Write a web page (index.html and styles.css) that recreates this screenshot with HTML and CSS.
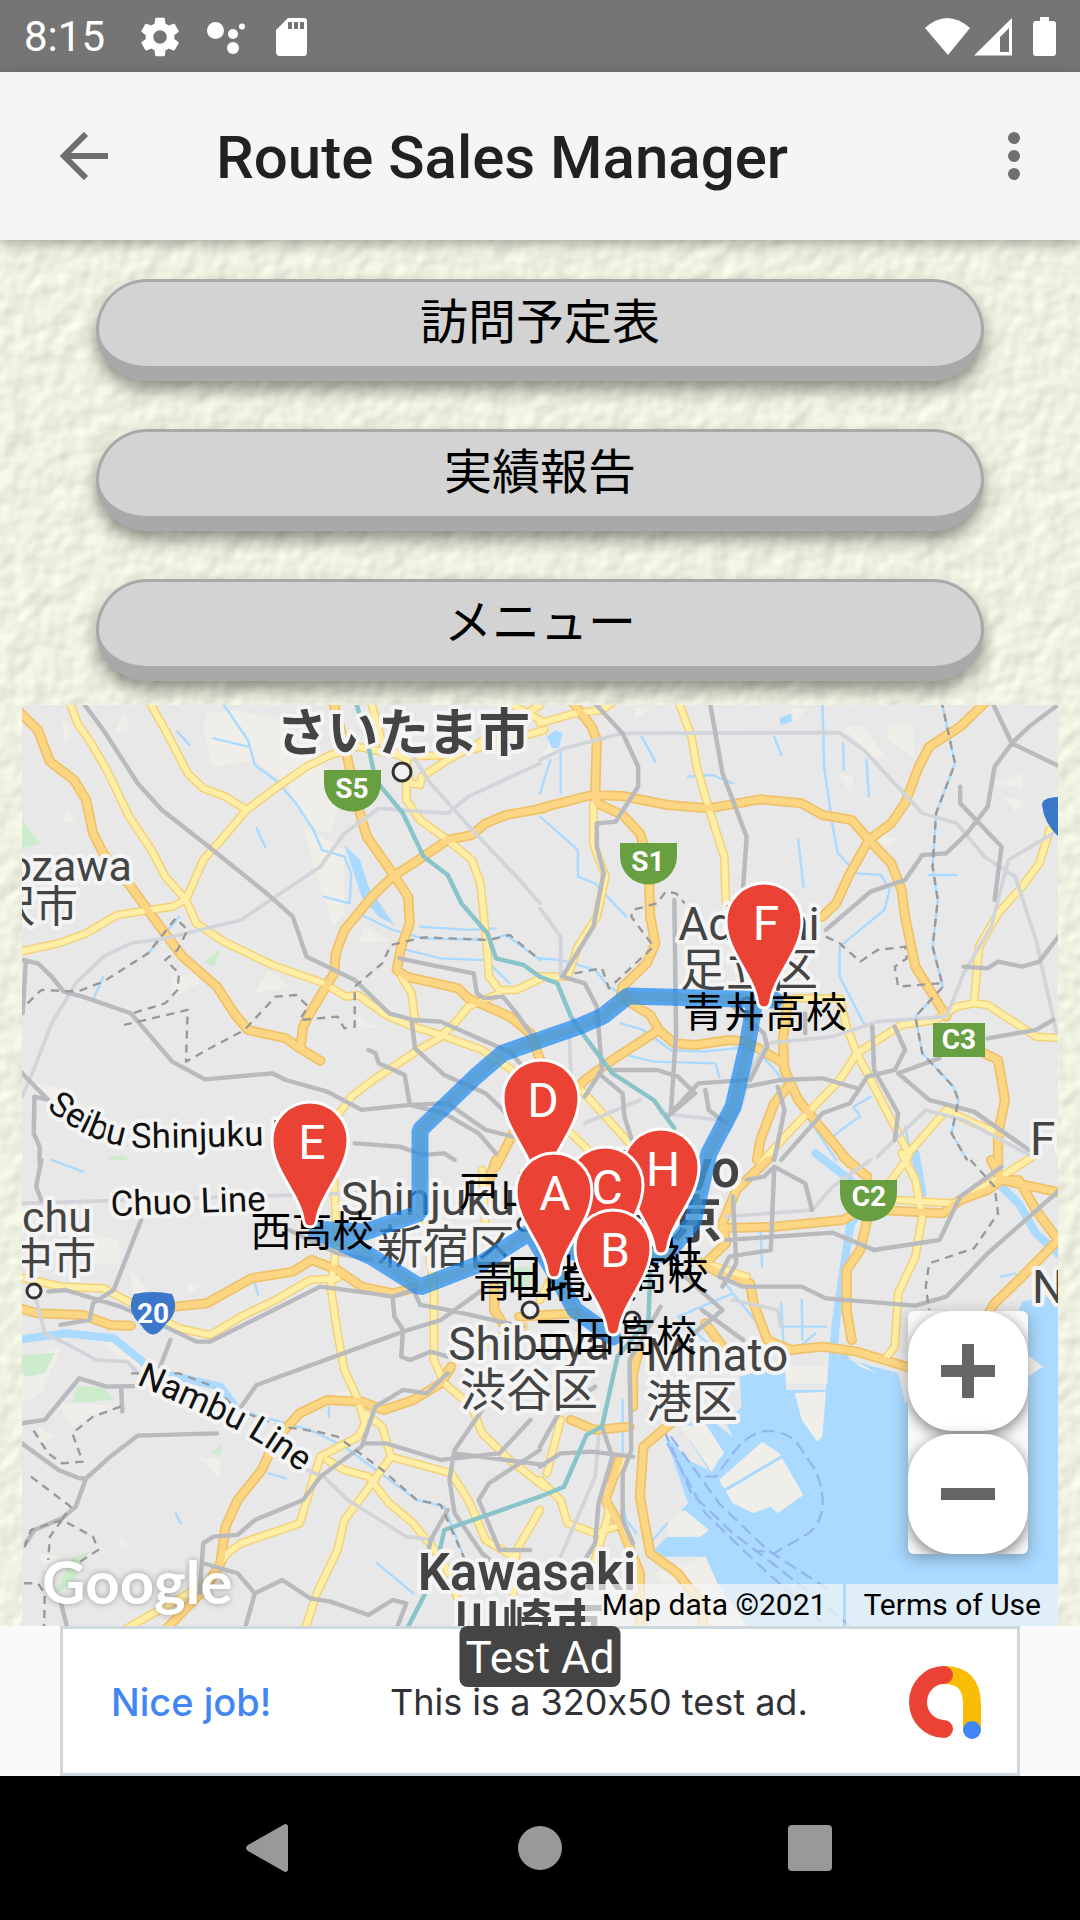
FILE: index.html
```html
<!DOCTYPE html>
<html lang="ja">
<head>
<meta charset="utf-8">
<meta name="viewport" content="width=device-width, initial-scale=1">
<title>Route Sales Manager</title>
<link rel="stylesheet" href="styles.css">
</head>
<body>
<div class="status-bar">
  <span class="clock">8:15</span>
  <svg class="status-left" viewBox="136 10 176 52" aria-hidden="true">
    <g fill="#fff">
      <path transform="translate(137 13) scale(1.92)" d="M19.43 12.98c.04-.32.07-.64.07-.98s-.03-.66-.07-.98l2.11-1.65c.19-.15.24-.42.12-.64l-2-3.46c-.12-.22-.39-.3-.61-.22l-2.49 1c-.52-.4-1.08-.73-1.69-.98l-.38-2.65C14.46 2.18 14.25 2 14 2h-4c-.25 0-.46.18-.49.42l-.38 2.65c-.61.25-1.17.59-1.69.98l-2.49-1c-.23-.09-.49 0-.61.22l-2 3.46c-.13.22-.07.49.12.64l2.11 1.65c-.04.32-.07.65-.07.98s.03.66.07.98l-2.11 1.65c-.19.15-.24.42-.12.64l2 3.46c.12.22.39.3.61.22l2.49-1c.52.4 1.08.73 1.69.98l.38 2.65c.03.24.24.42.49.42h4c.25 0 .46-.18.49-.42l.38-2.65c.61-.25 1.17-.59 1.69-.98l2.49 1c.23.09.49 0 .61-.22l2-3.46c.12-.22.07-.49-.12-.64l-2.11-1.65zM12 15.5c-1.93 0-3.5-1.57-3.5-3.5s1.57-3.5 3.5-3.5 3.5 1.57 3.5 3.5-1.57 3.5-3.500 3.500z"/>
      <circle cx="215.500" cy="29.500" r="8.500"/><circle cx="233" cy="33" r="5"/><circle cx="242" cy="25.500" r="3"/><circle cx="233" cy="47" r="6"/>
      <path fill-rule="evenodd" d="M288 17h16q3 0 3 3v31q0 4-3 4h-24q-4 0-4-4V29zM288 21v7h4v-7zM294 21v7h4v-7zM300 21v7h4v-7z"/>
    </g>
  </svg>
  <svg class="status-right" viewBox="924 10 134 52" aria-hidden="true">
    <path fill="#fff" d="M925 27Q947 7 970 27L948 54z"/>
    <path fill="#fff" fill-rule="evenodd" d="M1012 17V54.500H974zM1009 27L1000 36V51H1009z"/>
    <path fill="#fff" d="M1040 16h9v4h4q3 0 3 3v29q0 3-3 3h-17q-3 0-3-3V23q0-3 3-3h4z"/>
  </svg>
</div>

<header class="app-bar">
  <button class="icon-button" type="button" aria-label="Back">
    <svg viewBox="0 0 48 48"><path d="M48 24H5M26 2L4 24L26 46" fill="none" stroke="#6f6f6f" stroke-width="6"/></svg>
  </button>
  <h1>Route Sales Manager</h1>
  <button class="icon-button menu-button" type="button" aria-label="More options">
    <svg viewBox="0 0 48 48" fill="#6f6f6f"><circle cx="24" cy="6" r="6"/><circle cx="24" cy="24" r="6"/><circle cx="24" cy="42" r="6"/></svg>
  </button>
</header>

<main class="page">
  <svg class="paper" aria-hidden="true">
    <filter id="paper-grain" x="0" y="0" width="100%" height="100%" color-interpolation-filters="sRGB">
      <feTurbulence type="fractalNoise" baseFrequency="0.05" numOctaves="2" seed="8"/>
      <feDiffuseLighting surfaceScale="1" diffuseConstant="1.100" lighting-color="#f5f7e7"><feDistantLight azimuth="225" elevation="62"/></feDiffuseLighting>
    </filter>
    <rect width="100%" height="100%" filter="url(#paper-grain)"/>
  </svg>

  <nav class="actions">
    <button class="action" type="button">訪問予定表</button>
    <button class="action" type="button">実績報告</button>
    <button class="action" type="button">メニュー</button>
  </nav>

  <section class="map" aria-label="Map">
    <svg class="map-canvas" viewBox="22 705 1036 921" preserveAspectRatio="xMidYMid slice">
      <defs>
        <path id="pin" d="M0 0C-7 0-6-6-8-13C-13-35-38-58-38-87A38 38 0 0 1 38-87C38-58 13-35 8-13C6-6 7 0 0 0Z"/>
        <path id="exit" d="M0 0H57V13A28 28 0 0 1 0 13Z"/>
        <path id="seibu" d="M46 1108Q90 1145 138 1148Q200 1148 380 1142"/>
        <path id="nambu" d="M136 1384L212 1418Q262 1440 318 1486"/>
        <path id="loop-west" d="M775 1000L628 996L603 1016L580 1026L540 1040L503 1053L475 1077L420 1130V1213L365 1232L311 1229L372 1257L420 1287L482 1263L530 1232L555 1273L575 1310L613 1337"/>
        <path id="loop-east" d="M755 1000L747 1047L733 1107L709 1153L693 1222L668 1253L600 1262L545 1240"/>
        <g id="major">
          <path class="nw" d="M50 30L110 90L145 185L215 240L250 300L270 400L300 460L380 560L450 660L530 770L630 860L680 940L720 990L830 1015L870 1045L930 1082M970 15L1000 130L1020 230L1045 340L1065 410L1140 520L1185 590L1190 670L1165 740L1152 810L1180 830L1330 865L1360 895L1480 950L1540 1000L1568 1080M1580 325L1470 345L1410 370L1370 405L1300 420L1200 490L1140 530L1080 590L1000 690L975 760L970 820L900 940L880 980L872 1045M1500 1280L1440 1400"/>
          <path class="ne" d="M90 0L150 80L165 120L160 290L165 310L240 345L290 400L315 480L320 650L335 730L310 790L240 860L235 890L320 945L345 990L390 1030L450 1035L550 1020L600 1025L700 1085M0 325L150 285L240 288L370 315L490 325L640 298L760 310L820 345L905 360L955 420L1020 490L1050 570L1060 650L1090 800L1180 950M1300 0L1220 80L1130 140L1100 200L1060 310L1020 370L955 420L900 520L860 610L820 650M345 990L210 1080L130 1140L100 1175M720 900L705 1020L710 1110L750 1200L900 1390M1290 1060L1330 1080L1350 1200L1330 1300L1330 1390M720 1160L680 1210L640 1320L630 1380"/>
          <path class="sw" d="M50 443L110 460L240 465L320 495L380 497M510 440L600 430L730 355L850 335L905 300L980 330L1050 380L1140 400L1200 385M480 1410L600 1280L640 1210L655 1100L690 1020L760 930L800 840L870 760L950 720L1050 725L1115 750L1200 720L1280 670L1310 620M1435 380L1435 450L1460 490M1440 0L1420 60"/>
          <path class="se" d="M530 205L680 200L880 180L930 150L980 150L1170 160L1220 120L1300 90L1340 60L1520 100M950 180L930 270L890 330L890 450L905 540M1310 0L1340 60L1390 60L1440 150L1504 240L1400 350L1320 430L1290 480M880 -10L950 50M470 310L540 350L610 370L620 430L660 540L730 570L820 560L920 575L1080 625M380 790L300 860L290 1010L320 1180L400 1240L460 1320L480 1410M290 560L270 640L270 740M-60 470L100 460M480 310L540 250L530 190L570 90L660 0M90 780L160 810L260 800M230 900L190 1020L240 1110L290 1240L290 1398M480 490L560 600"/>
        </g>
        <g id="minor">
          <path class="nw" d="M200 0L225 70L265 130L310 210L375 350L440 450L480 530L540 600M430 0L480 90L545 220L590 265L655 290L715 330M1580 90L1450 130L1300 165L1180 170L1040 140L960 165L890 200L800 265L715 330L650 410L590 480L540 600L500 620L340 645L250 700L170 730L50 757M540 600L570 670L650 725L790 795L940 850L1005 890L1040 885L1120 945L1200 980L1280 1005L1400 1050L1500 1120M1180 180L1180 300L1220 360L1300 420L1370 480L1395 550L1405 650L1415 760L1420 830L1450 870L1500 870L1580 830M1450 880L1360 920L1320 970L1280 1010L1200 1060L1090 1135L1020 1190L950 1290M1165 830L1195 880L1205 960M1080 15L1110 130L1180 180L1190 250L1220 255L1225 230L1300 180L1390 130L1568 15M1500 120L1410 70M1568 60L1480 10"/>
          <path class="ne" d="M0 70L100 40L180 30L220 0M400 0L440 110L455 200L490 325L535 470L540 610M155 310L155 430L190 530L165 650L110 740L80 830M0 830L80 830M1480 390L1450 490L1400 560L1330 640L1275 740L1260 910L1210 920L1150 960L1050 975L920 1060M1260 910L1300 915L1440 1010L1520 1015M740 895L870 895L890 980L920 1060L1070 1360L1180 1230L1260 1270L1340 1300M920 1060L870 1140L720 1300L640 1390M120 1170L260 1330M60 1270L160 1370"/>
          <path class="sw" d="M50 350L180 380L300 385L400 440L520 505L610 525L700 470L800 420L900 360L980 355M965 0L980 240L960 380L980 520L1000 630L1040 720L1060 790L1040 830L930 890L870 1090L700 1150L660 1180L600 1270L360 1410M1060 760L1110 800L1135 890L1080 970L1000 1080L980 1170L920 1300L885 1410M950 900L1000 930L1070 950L1130 1030L1200 1090L1270 1180L1310 1250L1350 1398M1135 890L1310 940L1360 1020L1410 1140L1490 1190M1235 180L1260 390L1260 600L1290 670L1370 740L1400 820L1480 900L1580 980M1568 1050L1500 1170L1490 1300M1390 560L1520 500M1400 30L1410 200"/>
          <path class="se" d="M1050 -20L1090 60L1110 170L1090 290L1040 400L1030 560L1000 600M1070 -10L1000 90M1040 120L1200 130L1340 50L1430 -10M0 960L60 1020L80 1090L160 1120L220 1100M160 1200L200 1060L190 1000L240 900M60 780L20 940M0 270L60 300L0 420M480 310L600 350"/>
        </g>
      </defs>

      <rect class="land" x="22" y="705" width="1036" height="921"/>

      <g class="fields">
        <path class="nw" d="M600 40L680 30L820 60L880 160L1000 240L960 400L900 380L830 250L740 180L620 200L590 100ZM880 380L1000 450L1000 640L970 680L930 560ZM360 40L380 90L330 100ZM180 60L215 80L190 130ZM500 830L570 820L580 850L500 890ZM780 810L840 860L740 880ZM1060 680L1130 720L1040 730ZM1040 950L1095 980L1040 990ZM200 320L215 370L180 365ZM100 1150L180 1165L150 1200Z"/>
        <path class="ne" d="M880 80L940 80L1010 180L960 170ZM1010 70L1080 70L1090 175L1010 120ZM865 220L910 230L905 285ZM1320 250L1400 220L1400 265ZM1345 290L1410 305L1380 335ZM730 20L770 30L740 70ZM960 390L1040 420L1000 440ZM30 110L60 160L0 190ZM280 20L320 30L270 60Z"/>
        <path class="sw" d="M265 220L345 240L350 310L255 310ZM380 330L430 390L390 410ZM570 890L640 900L640 955ZM170 730L330 735L210 800ZM350 1130L375 1160L345 1170ZM540 370L585 378L550 400ZM64 590L180 560L120 700L64 730ZM280 530L360 550L420 630L360 600ZM110 1180L180 1190L140 1250ZM520 700L640 700L680 750L560 740ZM960 700L1040 690L1020 720ZM110 800L160 830L120 850Z"/>
      </g>
      <g class="parks">
        <path class="nw" d="M64 360L118 432L64 445ZM640 745L595 785L622 802ZM310 1380Q350 1355 375 1380Z"/>
        <path class="sw" d="M64 585L160 578L130 640L80 650L64 640ZM225 680L300 680L330 720L210 728ZM210 1190L260 1175L200 1280L160 1300ZM645 850L640 885L612 880ZM1470 320H1540V380H1470Z"/>
      </g>
      <g class="water">
        <path class="nw" d="M1000 435L1045 480L1070 560L1145 675L1100 650L1050 590Z"/>
        <path class="ne" d="M20 110L45 90L65 100L55 145L35 145ZM695 55L730 40L730 65L700 75Z"/>
        <path class="se" d="M1520 400L1400 425L1380 480L1300 560L1180 640L1060 730L1040 640L900 600L890 580L840 590L830 690L715 690L710 610L580 650L585 740L540 790L560 830L510 790L420 790L440 850L490 930L520 900L500 935L430 900L360 820L430 1030L410 1050L490 1110L465 1130L370 1130L310 1190L480 1190L520 1280L610 1410L1520 1410Z"/>
      </g>
      <g class="rivers">
        <path class="nw" d="M650 15L720 120L740 195L800 240L860 310L910 390L935 450L1000 470L1020 520L1015 610L940 590M620 115L720 140M515 95L550 135M745 385L770 440M1040 640L1140 690L1230 715L1420 720L1470 705L1568 780M1220 680L1360 690L1440 685M1180 750L1280 775L1400 780M430 760L520 650M270 900L300 830M1430 800L1480 850"/>
        <path class="ne" d="M820 0L825 200L850 380L865 460L920 520L990 525L1015 570L1000 630L870 740L870 830L945 980M1165 0L1205 190L1150 340L1140 500L1155 600L1140 740L1170 860L1090 950L1110 1060L1200 1160L1215 1200L1195 1300L1240 1380M0 350L110 450L110 530L160 550L250 650M0 775L60 780L160 810L200 860L235 880M235 970L300 990L380 1050L470 1055L620 1040L690 1120L860 1380M230 1060L330 1085L510 1090L520 1130M430 230L500 225L560 250M295 110L335 185M680 110L700 165M880 130L882 210M948 180L955 290M750 420L765 560M30 180L0 280M60 150L60 280M850 1310L900 1270L930 1250L910 1220L960 1190M1130 525L1210 525M1060 1280L1080 1380"/>
        <path class="sw" d="M690 750L900 810L1000 860L1210 1020L1290 1040L1350 1200M740 370L750 405M780 940L830 955M510 1060L525 1090M955 740L955 770M150 0L240 35M1095 1210L1200 1300"/>
        <path class="se" d="M490 300L560 400L640 500M400 470L560 400M640 200L645 320M700 430L710 600L800 520M760 420L762 540M710 500H830M710 560H830M240 720L240 1030L250 1080L280 1120M400 470L520 580M310 1160L370 1090M430 1050L370 1140M1500 500L1440 420M1340 350L1380 340"/>
      </g>
      <g class="broad-rivers">
        <path class="sw" d="M50 540L190 520L330 535L420 610M470 640L640 680L690 750"/>
        <path class="se" d="M850 600L860 480L900 200L930 140L900 60L800 -20M1320 60L1390 130L1440 220L1504 280M1090 -20L1110 100"/>
      </g>
      <g class="islands">
        <path class="se" d="M740 700L830 695L820 830L805 845L760 780ZM520 960L645 845L695 880L765 1005L690 1060L670 1040L620 1060L560 1030ZM1410 580L1460 620L1410 655ZM900 595L980 640L930 620ZM715 620H835V670H715ZM410 800L480 790L535 880L495 930ZM370 1090L420 1050L490 1110L465 1130L370 1130ZM330 1240L480 1190L520 1280L600 1398H500L460 1300L350 1260Z"/>
        <path class="island-canal se" d="M530 995L710 885"/>
      </g>

      <g class="ferries">
        <path class="se" d="M360 810L440 1000L560 1120L700 1230L900 1398M380 830L520 1030L660 1170L840 1290M370 850L480 1060L620 1200L830 1398M480 950L510 950L560 880Q640 770 740 840L800 930Q850 1060 780 1120L680 1180L620 1170"/>
      </g>
      <use href="#minor" class="minor-casing"/>
      <use href="#major" class="major-casing"/>
      <use href="#minor" class="minor-road"/>
      <use href="#major" class="major-road"/>

      <g class="light-rail">
        <path class="nw" d="M64 1190L90 1130L150 970L220 850L300 770L380 730L480 715L600 685L700 660L800 590L930 500L1000 400L1100 325L1300 340L1360 290L1568 190M1200 170L1250 250L1380 400L1500 530L1568 610"/>
        <path class="ne" d="M0 180L70 145L240 100L870 98L940 150L1110 340L1210 370L1290 470L1380 530L1440 720L1500 1000M1490 400L1360 480L1310 680L1230 820L1180 950L980 965L850 1010L660 1030L610 1110L590 1200L550 1290M0 625L60 710L60 830M85 1000L90 1130M980 1370L1120 1230L1230 1260L1430 1370M130 1270L290 1200M350 1240L520 1260"/>
        <path class="sw" d="M64 130L1100 97M100 400L130 520L190 550L280 600L370 605L400 640M890 930L940 950L1010 1020L1180 1130L1260 1140"/>
        <path class="se" d="M540 170L790 150L850 80L960 0M170 830L160 950L60 1190M700 500L690 450L560 420"/>
      </g>
      <g class="rail">
        <path class="nw" d="M235 0L300 90L400 250L470 330L600 435L780 585L850 650L870 710L890 770L1030 840L1130 940L1200 960L1280 965L1400 1020L1480 1055L1510 1090M64 780L110 790L150 830L185 875L240 890L380 940L500 1085L595 1138L790 1120L830 1140L950 1175L1050 1230L1190 1215L1290 1210M1070 1050L1090 1060L1100 1090L1175 1125L1190 1215M1160 775L1250 795L1375 820L1385 880L1405 895L1460 890L1500 940L1540 1000M1195 960L1205 1045L1290 1125L1410 1180L1470 1240M1190 1215L1290 1240L1390 1300L1440 1360M1300 1210L1410 1290L1490 1310M55 1110L140 1200L100 1190L98 1300L115 1340L115 1390M1030 1330L1160 1340L1230 1365L1290 1360L1320 1380M75 780L66 940"/>
        <path class="ne" d="M150 0L240 100L285 200L285 260L220 365L165 370L165 440L185 520L155 680L65 830L130 850L165 920L180 1110M492 0L530 220L600 410L590 560M390 600L395 1000L380 1240L460 1150L600 1140M210 1110L340 1110L400 1130L450 1180L370 1250M830 690L960 575L1060 540L1110 465L1180 460L1240 400L1300 320L1320 200L1370 130L1420 80L1510 10M1310 0L1370 130L1520 205M1220 260L1220 310L1340 440L1320 600M1520 690L1450 785L1400 800L1330 785L1300 805L1230 800M1300 1015L1440 990L1490 960M965 980L970 1110L1040 1240L1030 1320M600 1160L700 1140L820 1135L920 1165M1030 980L1060 1050L1030 1110L950 1130L900 1210L820 1240L700 1380M1160 1075L1040 1120L1130 1200L1260 1235L1420 1350M180 1110L130 1190M170 1120L240 1180L245 1250L270 1330M480 1170L490 1230L540 1270M690 1160L710 1230L680 1380M560 920L650 1000L660 1040L610 1140M770 940L770 1000"/>
        <path class="sw" d="M120 0L105 80L120 120M410 180L330 390L270 430L260 480L175 495M140 395L190 390L350 440L480 500L570 545L610 545L930 380L1080 400L1140 410L1200 390M495 540L465 620M1140 410L1145 470L1170 510L1165 590L1190 600L1250 575L1300 590M700 740L745 675L1170 515L1280 480L1400 390M1200 390L1220 435L1300 450L1430 480L1520 500M64 790L130 780L230 655L310 680L390 678M352 690L355 755M50 840L170 930L230 955L250 955L320 890L400 827L630 820M250 955L220 1040L180 1075L100 1110L75 1150M197 1410L175 1320M580 1300L590 1150L620 1130L690 1125L740 1080L880 1020L930 950L1050 860L1090 740L1170 690L1240 700L1300 640M590 1210L690 1240L740 1300L710 1410M740 1300L820 1260L900 1315L960 1325L1070 1365L1140 1320L1180 1330L1150 1410M1060 850L1120 850L1280 900L1450 880L1540 780M1400 750L1320 870L1305 960L1320 1060L1400 1180L1480 1250M1320 880L1580 915M1568 870L1420 970L1390 1020L1450 1170L1540 1170M1300 1050L1250 1140L1240 1200M840 210L980 280L1080 300"/>
        <path class="se" d="M540 240L680 230L850 218L970 270L1160 240L1220 110L1340 20M680 30L670 270L550 290L520 350M600 60L650 50L680 20L770 70L790 150M520 350L590 380L760 380L830 415L1090 437L1180 410L1300 280L1520 80M560 110L570 310L530 380M350 440L260 600L265 870L240 940L240 1080L270 1150M470 450L590 540M180 800L210 890L170 1030L160 1150L130 1200M0 920L60 880L150 875L270 890M160 680L60 750L0 860M410 340L530 450L400 560"/>
      </g>
      <g class="tram">
        <path class="nw" d="M1032 0L1070 140L1090 240L1170 340L1230 470L1300 525L1340 610L1415 700L1440 775L1520 795L1568 830"/>
        <path class="ne" d="M0 830L50 850L90 950L130 1010L210 1120L330 1200L390 1285"/>
        <path class="sw" d="M1568 1010L1290 1110L1275 1180M1240 1290L1180 1410"/>
        <path class="se" d="M320 340L315 480L225 590L180 800L135 825L70 980L0 1010"/>
      </g>
      <g class="borders">
        <path class="nw" d="M80 910L120 870L225 875L300 845L430 760L510 655L545 690L515 750L480 780L520 820L515 870L480 910L385 940M360 975L545 930L540 1085L600 1050L710 990L800 890L860 885L895 920L870 960L980 950L1000 985L1030 980L1030 860L1110 790L1135 735L1230 712L1420 720L1480 705L1568 780"/>
        <path class="ne" d="M1165 0L1205 190L1150 340L1140 500L1155 600L1140 740L1170 860L1090 950L1110 1060L1200 1160L1215 1200L1195 1300L1240 1380M100 820L180 805L200 865L330 740L265 650L270 630L340 610L365 575L395 580L420 610M830 710L870 730L930 785L980 750L1060 740L1065 775L1030 800L1040 860L1160 850"/>
        <path class="sw" d="M380 640L520 640L620 680L690 750L820 800L920 815L980 830L1110 930L1210 1020L1280 1035L1350 1200M350 740L270 770L210 820L240 905L180 910L140 880L90 800M90 950L205 1040L180 1080L270 1130L285 1170L210 1220M180 1080L145 1130L140 1200M70 1270L110 1270L130 1300L128 1398M180 1080L90 1110L70 1165"/>
        <path class="se" d="M1250 0L1320 80L1330 160L1260 265L1130 310L1120 380L1130 450"/>
      </g>

      <g class="shields">
        <use href="#exit" x="324" y="770"/><text x="352" y="798">S5</text>
        <use href="#exit" x="620" y="843"/><text x="648" y="871">S1</text>
        <use href="#exit" x="840" y="1180"/><text x="869" y="1206">C2</text>
        <path d="M933 1023H985V1057H933Z"/><text x="959" y="1049">C3</text>
        <g class="national">
          <path d="M134 1294Q153 1290 172 1294Q181 1311 165 1325Q153 1344 141 1325Q125 1311 134 1294Z"/><text x="153" y="1323">20</text>
          <path d="M1060 797Q1042 797 1042 805Q1044 824 1060 838Z"/>
        </g>
      </g>

      <g class="town-dots">
        <circle cx="402" cy="772" r="9"/><circle cx="34" cy="1291" r="7"/><circle cx="530" cy="1310" r="8"/><circle cx="632" cy="1320" r="8"/><circle cx="525" cy="1224" r="7"/><circle cx="747" cy="1005" r="7"/>
      </g>

      <g class="city-labels">
        <text x="403" y="751">さいたま市</text>
        <text class="tokyo" x="740" y="1187">Tokyo</text><text class="tokyo" x="722" y="1238">東京</text>
        <text x="527" y="1590">Kawasaki</text><text x="527" y="1642">川崎市</text>
      </g>
      <g class="town-labels">
        <text x="132" y="881">Tokorozawa</text><text x="78" y="922">所沢市</text>
        <text x="92" y="1232">Fuchu</text><text x="96" y="1274">府中市</text>
      </g>
      <g class="ward-labels">
        <text x="749" y="940">Adachi</text><text x="749" y="986">足立区</text>
        <text x="428" y="1215">Shinjuku</text><text x="446" y="1263">新宿区</text>
        <text x="529" y="1360">Shibuya</text><text x="529" y="1406">渋谷区</text>
        <text x="717" y="1371">Minato</text><text x="692" y="1418">港区</text>
        <text class="from-left" x="1030" y="1155">Funabashi</text><text class="from-left" x="1032" y="1303">Narashino</text>
      </g>
      <g class="line-labels">
        <text><textPath href="#seibu">Seibu Shinjuku Line</textPath></text>
        <text transform="translate(111 1216) rotate(-2)">Chuo Line</text>
        <text><textPath href="#nambu">Nambu Line</textPath></text>
      </g>

      <g class="route-core"><use href="#loop-west"/><use href="#loop-east"/></g>
      <g class="route"><use href="#loop-west"/><use href="#loop-east"/></g>

      <g class="stop-labels">
        <text x="765" y="1027">青井高校</text>
        <text x="541" y="1206">戸山高校</text>
        <text x="312" y="1246">西高校</text>
        <text x="661" y="1272">本社</text>
        <text x="606" y="1289">日比谷高校</text>
        <text x="555" y="1297">青山高校</text>
        <text x="615" y="1351">三田高校</text>
      </g>
      <g class="pins">
        <use href="#pin" x="764" y="1008"/><text x="766" y="940">F</text>
        <use href="#pin" x="541" y="1185"/><text x="543" y="1117">D</text>
        <use href="#pin" x="310" y="1227"/><text x="312" y="1159">E</text>
        <use href="#pin" x="661" y="1254"/><text x="663" y="1186">H</text>
        <use href="#pin" x="605" y="1272"/><text x="607" y="1204">C</text>
        <use href="#pin" x="554" y="1278"/><text x="555" y="1210">A</text>
        <use href="#pin" x="613" y="1335"/><text x="615" y="1267">B</text>
      </g>
    </svg>

    <span class="map-logo">Google</span>
    <div class="zoom">
      <button type="button" aria-label="Zoom in"><svg viewBox="0 0 54 54"><path d="M27 0V54M0 27H54" stroke="#666" stroke-width="12"/></svg></button>
      <button type="button" aria-label="Zoom out"><svg viewBox="0 0 54 54"><path d="M0 27H54" stroke="#666" stroke-width="12"/></svg></button>
    </div>
    <div class="credits"><span>Map data ©2021</span><a href="#">Terms of Use</a></div>
  </section>
</main>

<aside class="ad-strip">
  <div class="ad">
    <span class="ad-badge">Test Ad</span>
    <a class="ad-title" href="#">Nice job!</a>
    <span class="ad-text">This is a 320x50 test ad.</span>
    <svg class="ad-logo" viewBox="0 0 73 73" fill="none" stroke-width="18" stroke-linecap="round">
      <path d="M36 9Q64 9 64 38V60" stroke="#fbbc04"/>
      <path d="M36 9A26 27 0 0 0 36 63" stroke="#ea4335"/>
      <circle cx="64" cy="64" r="9" fill="#4285f4" stroke="none"/>
    </svg>
  </div>
</aside>

<footer class="system-nav">
  <button type="button" aria-label="System back"><svg viewBox="3 0 48 48" fill="#999"><path d="M42 0Q45 0 45 3V45Q45 48 42 48L5 27Q1 24 5 21Z"/></svg></button>
  <button type="button" aria-label="Home"><svg viewBox="0 0 48 48" fill="#999"><circle cx="24" cy="24" r="22"/></svg></button>
  <button type="button" aria-label="Recent apps"><svg viewBox="0 0 48 48" fill="#999"><rect x="2" y="1" width="44" height="46" rx="4"/></svg></button>
</footer>
</body>
</html>
```

FILE: styles.css
```css
* { box-sizing: border-box; }

body {
  margin: 0;
  min-height: 100vh;
  display: flex;
  flex-direction: column;
  background: #000;
  font-family: Roboto, "Noto Sans CJK JP", sans-serif;
}

button {
  margin: 0;
  padding: 0;
  border: 0;
  background: none;
  color: inherit;
  font: inherit;
  cursor: pointer;
}

a { color: inherit; text-decoration: none; }
svg { display: block; }

/* System status bar */
.status-bar {
  height: 72px;
  padding: 2px 22px 0 24px;
  display: flex;
  align-items: center;
  background: #757575;
  color: #fff;
}
.clock { width: 112px; font-size: 42px; line-height: 52px; }
.status-left { width: 176px; height: 52px; }
.status-right { width: 134px; height: 52px; margin-left: auto; }

/* App bar */
.app-bar {
  position: relative;
  z-index: 1;
  height: 168px;
  padding: 0 42px 0 60px;
  display: flex;
  align-items: center;
  background: #f5f5f5;
  box-shadow: 0 4px 12px rgba(0, 0, 0, .3);
}
.app-bar h1 {
  flex: 1;
  margin: 0 0 0 108px;
  padding-top: 4px;
  color: #212121;
  font-size: 60px;
  font-weight: 500;
  line-height: 72px;
}
.icon-button svg { width: 48px; height: 48px; }

/* Page body */
.page {
  position: relative;
  flex: 1;
  display: flex;
  flex-direction: column;
  padding: 39px 22px 0;
}
.paper {
  position: absolute;
  inset: 0;
  width: 100%;
  height: 100%;
}
.actions {
  position: relative;
  display: grid;
  gap: 48px;
  margin: 0 74px 24px;
}
.action {
  height: 102px;
  padding-bottom: 12px;
  border: 3px solid #a9a9a9;
  border-bottom-width: 15px;
  border-radius: 51px;
  background: #d3d3d3;
  box-shadow: 0 9px 16px rgba(0, 0, 0, .4);
  color: #000;
  font-family: "Noto Sans CJK JP", sans-serif;
  font-size: 48px;
  line-height: 72px;
}

/* Map */
.map {
  position: relative;
  flex: 1;
  min-height: 600px;
  overflow: hidden;
}
.map-canvas {
  position: absolute;
  inset: 0;
  width: 100%;
  height: 100%;
}
/* The four sheets of the drawn map */
.nw { transform: translate(0px, 700px) scale(.3444, .3333); }
.ne { transform: translate(540px, 700px) scale(.3444, .3333); }
.sw { transform: translate(0px, 1160px) scale(.3444, .3333); }
.se { transform: translate(540px, 1160px) scale(.3444, .3333); }

.land { fill: #e8e8e8; }
.fields, .islands { fill: #f0eee8; }
.parks { fill: #cdeccd; }
.water { fill: #aadaff; }
.rivers, .broad-rivers, .island-canal, .light-rail, .rail, .tram, .borders, .ferries, .route, .route-core,
.minor-casing, .minor-road, .major-casing, .major-road {
  fill: none;
  stroke-linejoin: round;
  stroke-linecap: round;
}
.rivers { stroke: #aadaff; stroke-width: 7; }
.broad-rivers { stroke: #aadaff; stroke-width: 24; }
.island-canal { stroke: #aadaff; stroke-width: 9; }
.minor-casing { stroke: #f3d27c; stroke-width: 26; }
.minor-road { stroke: #ffeea6; stroke-width: 17; }
.major-casing { stroke: #efc168; stroke-width: 30; }
.major-road { stroke: #fdd684; stroke-width: 20; }
.light-rail { stroke: #d1d5da; stroke-width: 11; }
.rail { stroke: #b8babd; stroke-width: 13; }
.tram { stroke: #88c4c9; stroke-width: 13; }
.borders { stroke: #999; stroke-width: 7; stroke-dasharray: 24 18; stroke-linecap: butt; }
.ferries { stroke: #92b8ef; stroke-width: 7; stroke-dasharray: 38 18; stroke-linecap: butt; }
.route { stroke: #1486f2; stroke-width: 17; opacity: .68; stroke-linejoin: bevel; }
.route-core { stroke: #f2c860; stroke-width: 9; opacity: .5; }

.shields { fill: #689f41; font-size: 28px; font-weight: 700; text-anchor: middle; }
.shields .national { fill: #3b78c9; }
.shields text { fill: #fff; }
.town-dots { fill: #f2f2f2; stroke: #333; stroke-width: 3; }

.city-labels, .town-labels, .ward-labels, .line-labels {
  fill: #444;
  stroke: #f4f4f4;
  stroke-width: 8;
  stroke-linejoin: round;
  paint-order: stroke;
}
.city-labels { font-size: 51px; font-weight: 600; text-anchor: middle; }
.city-labels .tokyo, .town-labels { text-anchor: end; }
.town-labels { font-size: 43px; }
.ward-labels { font-size: 46px; text-anchor: middle; }
.ward-labels .from-left { text-anchor: start; }
.line-labels { fill: #111; font-size: 35px; }
.stop-labels { font-family: "Noto Sans CJK JP", sans-serif; font-size: 41px; text-anchor: middle; }
.pins { fill: #ea4335; stroke: #fff; stroke-width: 3; }
.pins text { fill: #fff; stroke: none; font-size: 48px; text-anchor: middle; }

.map-logo {
  position: absolute;
  left: 20px;
  bottom: 9px;
  color: #fff;
  font-family: Lato, sans-serif;
  font-size: 60px;
  font-weight: 700;
  line-height: 72px;
  text-shadow: 0 0 6px rgba(0, 0, 0, .35);
}
.zoom {
  position: absolute;
  right: 30px;
  bottom: 72px;
  width: 120px;
  display: grid;
  gap: 3px;
  overflow: hidden;
  border-radius: 6px;
  background: #fafafa;
  filter: drop-shadow(0 4px 8px rgba(0, 0, 0, .3));
}
.zoom button {
  height: 120px;
  display: grid;
  place-items: center;
  border-radius: 45px;
  background: #fff;
  box-shadow: 0 4px 14px rgba(0, 0, 0, .5);
}
.zoom svg { width: 54px; height: 54px; }
.credits {
  position: absolute;
  right: 0;
  bottom: 0;
  display: flex;
  gap: 3px;
  font-size: 30px;
  line-height: 42px;
}
.credits > * { padding: 0 17px; background: rgba(245, 245, 245, .72); }

/* Advertisement */
.ad-strip { padding: 0 60px; background: #fafafa; }
.ad {
  position: relative;
  height: 150px;
  padding: 2px 36px 0 48px;
  display: flex;
  align-items: center;
  border: 3px solid #cfd8dc;
  background: #fff;
  color: #303236;
  font-family: Inter, sans-serif;
  font-size: 36px;
  font-variant-ligatures: no-contextual;
  line-height: 48px;
}
.ad-title { flex: 0 0 279px; color: #4285f4; font-size: 38px; font-weight: 500; }
.ad-logo { width: 73px; height: 73px; margin-left: auto; }
.ad-badge {
  position: absolute;
  top: -3px;
  left: 50%;
  padding: 4px 6px 0;
  transform: translateX(-50%);
  border-radius: 8px;
  background: #444;
  color: #fff;
  font-family: Roboto, sans-serif;
  font-size: 44px;
  line-height: 57px;
}

/* System navigation */
.system-nav {
  height: 144px;
  padding: 0 135px;
  display: grid;
  grid-template-columns: repeat(3, 1fr);
  place-items: center;
  background: #000;
}
.system-nav svg { width: 48px; height: 48px; }
```
